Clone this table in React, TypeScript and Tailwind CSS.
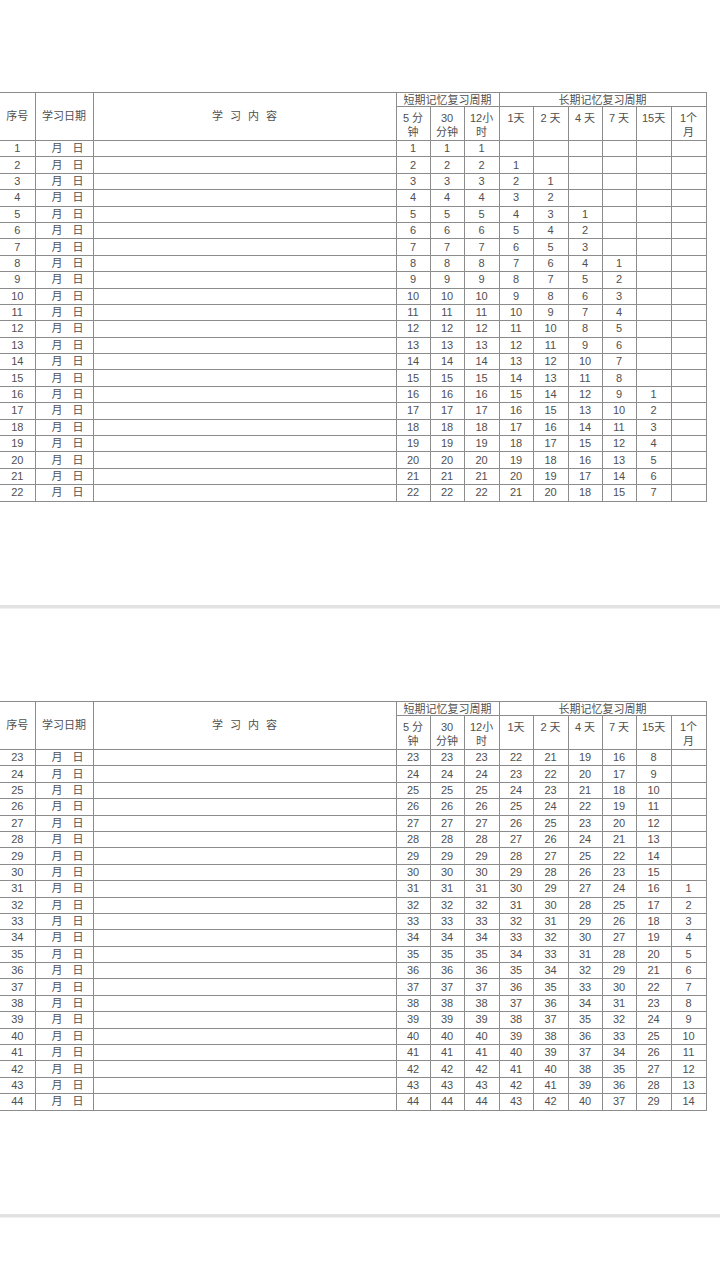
import React from "react"

const font = { fontFamily: '"Liberation Sans", "Noto Sans CJK SC", sans-serif' }

const widths = [35, 58, 303, 34, 34, 35, 34, 35, 34, 34, 35, 35]
const offsets = [1, 2, 4, 7, 15, 30]

const cell = "border border-[#8c8c8c] p-0 text-center align-middle leading-none"

function Row({ n }: { n: number }) {
  const vals = [n, n, n, ...offsets.map((o) => (n - o >= 1 ? n - o : ""))]
  return (
    <tr className="h-[16.4px]">
      <td className={cell + " border-l-0"}>{n}</td>
      <td className={cell}>
        <div className="flex justify-center gap-[10px] pl-[7px]">
          <span>月</span>
          <span>日</span>
        </div>
      </td>
      <td className={cell}></td>
      {vals.map((v, i) => (
        <td key={i} className={cell}>
          {v}
        </td>
      ))}
    </tr>
  )
}

function Sheet({ start }: { start: number }) {
  const rows = Array.from({ length: 22 }, (_, i) => start + i)
  const sub = [
    ["5 分", "钟"],
    ["30", "分钟"],
    ["12小", "时"],
    ["1天"],
    ["2 天"],
    ["4 天"],
    ["7 天"],
    ["15天"],
    ["1个", "月"],
  ]
  return (
    <div className="h-[605px] pt-[92px]">
      <table className="table-fixed border-collapse text-[11px] text-[#505050] w-[706px]" style={font}>
        <colgroup>
          {widths.map((w, i) => (
            <col key={i} style={{ width: w }} />
          ))}
        </colgroup>
        <thead>
          <tr className="h-[14px]">
            <td rowSpan={2} className={cell + " border-l-0"}>序号</td>
            <td rowSpan={2} className={cell}>学习日期</td>
            <td rowSpan={2} className={cell}>
              <div className="flex justify-center gap-[7px]">
                <span>学</span>
                <span>习</span>
                <span>内</span>
                <span>容</span>
              </div>
            </td>
            <td colSpan={3} className={cell + " pt-[2px]"}>短期记忆复习周期</td>
            <td colSpan={6} className={cell + " pt-[2px]"}>长期记忆复习周期</td>
          </tr>
          <tr className="h-[34px]">
            {sub.map((s, i) => (
              <td key={i} className="border border-[#8c8c8c] p-0 pt-[4px] text-center align-top">
                {s.map((t, j) => (
                  <div key={j} className="h-[14px] leading-[14px]">
                    {t}
                  </div>
                ))}
              </td>
            ))}
          </tr>
        </thead>
        <tbody>
          {rows.map((n) => (
            <Row key={n} n={n} />
          ))}
        </tbody>
      </table>
    </div>
  )
}

export default function App() {
  return (
    <div className="min-h-[1280px] w-[720px] bg-white">
      <Sheet start={1} />
      <div className="h-[3px] bg-[#e2e2e2]" />
      <div className="h-[1px] bg-[#f0f0f0]" />
      <Sheet start={23} />
      <div className="h-[3px] bg-[#e2e2e2]" />
      <div className="h-[1px] bg-[#f0f0f0]" />
    </div>
  )
}
